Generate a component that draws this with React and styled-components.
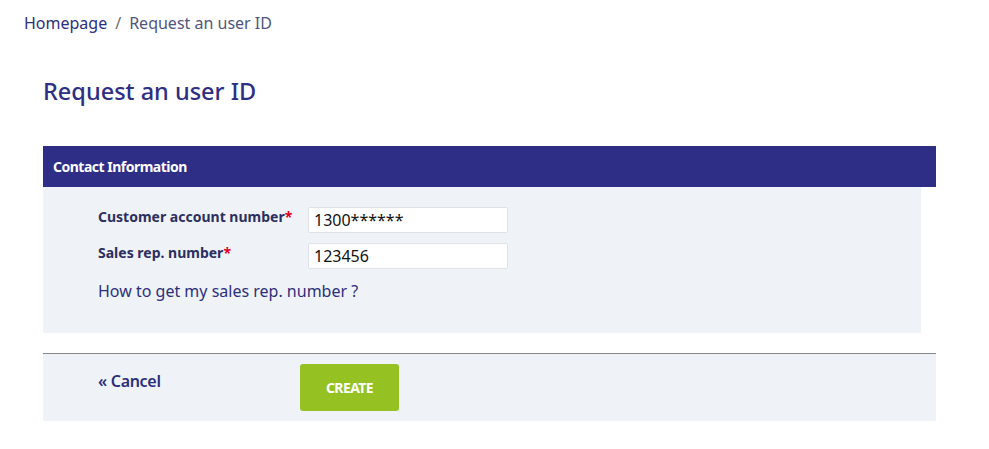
import React from "react";
import styled, { createGlobalStyle } from "styled-components";

const GlobalStyle = createGlobalStyle`
  body {
    margin: 0;
    background: #ffffff;
    font-family: "Noto Sans", "Open Sans", sans-serif;
  }
`;

const Page = styled.div`
  width: 989px;
  padding: 12px 0 0 0;
`;

const Breadcrumb = styled.nav`
  display: flex;
  align-items: center;
  gap: 8px;
  padding-left: 24px;
  font-size: 16px;
  line-height: 22px;
`;

const Crumb = styled.a`
  color: ${(p) => (p.current ? "#50557e" : "#2d2f7c")};
  text-decoration: none;
`;

const Sep = styled.span`
  color: #6f6a6a;
`;

const Content = styled.div`
  padding: 0 53px 0 43px;
`;

const Title = styled.h1`
  margin: 42px 0 0 0;
  font-size: 23.5px;
  line-height: 30px;
  font-weight: 500;
  color: #2e2e84;
`;

const Section = styled.section`
  margin-top: 40px;
`;

const SectionHeader = styled.div`
  height: 41px;
  display: flex;
  align-items: center;
  padding-left: 10px;
  background: #2e2e87;
  color: #ffffff;
  font-size: 14px;
  font-weight: 700;
  letter-spacing: -0.5px;
`;

const SectionBody = styled.div`
  margin-right: 15px;
  background: #eff3f8;
  padding: 20px 0 31px 55px;
`;

const FieldRow = styled.div`
  display: grid;
  grid-template-columns: 210px 200px;
  align-items: start;
  margin-bottom: 10px;
`;

const Label = styled.label`
  font-size: 14px;
  font-weight: 700;
  color: #2d2f5e;
  line-height: 20px;
`;

const Required = styled.span`
  color: #e3001b;
`;

const Input = styled.input`
  box-sizing: border-box;
  width: 200px;
  height: 26px;
  border: 1px solid #dfe1e5;
  border-radius: 2px;
  background: #ffffff;
  padding: 0 5px;
  font-family: "Noto Sans", "Open Sans", sans-serif;
  font-size: 16px;
  color: #111111;
  outline: none;
`;

const HelpLink = styled.a`
  display: block;
  margin-top: 11px;
  font-size: 16px;
  line-height: 22px;
  color: #2d2f7c;
  text-decoration: none;
`;

const Footer = styled.div`
  margin-top: 20px;
  border-top: 1px solid #85878c;
  background: #eff3f8;
  height: 68px;
  display: flex;
  align-items: flex-start;
  padding: 10px 0 0 55px;
  box-sizing: border-box;
`;

const CancelLink = styled.a`
  width: 202px;
  margin-top: 6px;
  font-size: 16px;
  font-weight: 600;
  color: #2d2f7c;
  text-decoration: none;
  letter-spacing: -0.3px;
`;

const CreateButton = styled.button`
  width: 99px;
  height: 47px;
  border: none;
  border-radius: 3px;
  background: #95c123;
  color: #ffffff;
  font-family: "Noto Sans", "Open Sans", sans-serif;
  font-size: 14px;
  font-weight: 700;
  letter-spacing: -0.6px;
  cursor: pointer;
`;

export default function App() {
  return (
    <>
      <GlobalStyle />
      <Page>
        <Breadcrumb>
          <Crumb href="#">Homepage</Crumb>
          <Sep>/</Sep>
          <Crumb current>Request an user ID</Crumb>
        </Breadcrumb>
        <Content>
          <Title>Request an user ID</Title>
          <Section>
            <SectionHeader>Contact Information</SectionHeader>
            <SectionBody>
              <FieldRow>
                <Label>
                  Customer account number<Required>*</Required>
                </Label>
                <Input defaultValue="1300******" />
              </FieldRow>
              <FieldRow>
                <Label>
                  Sales rep. number<Required>*</Required>
                </Label>
                <Input defaultValue="123456" />
              </FieldRow>
              <HelpLink href="#">How to get my sales rep. number ?</HelpLink>
            </SectionBody>
          </Section>
          <Footer>
            <CancelLink href="#">« Cancel</CancelLink>
            <CreateButton>CREATE</CreateButton>
          </Footer>
        </Content>
      </Page>
    </>
  );
}
